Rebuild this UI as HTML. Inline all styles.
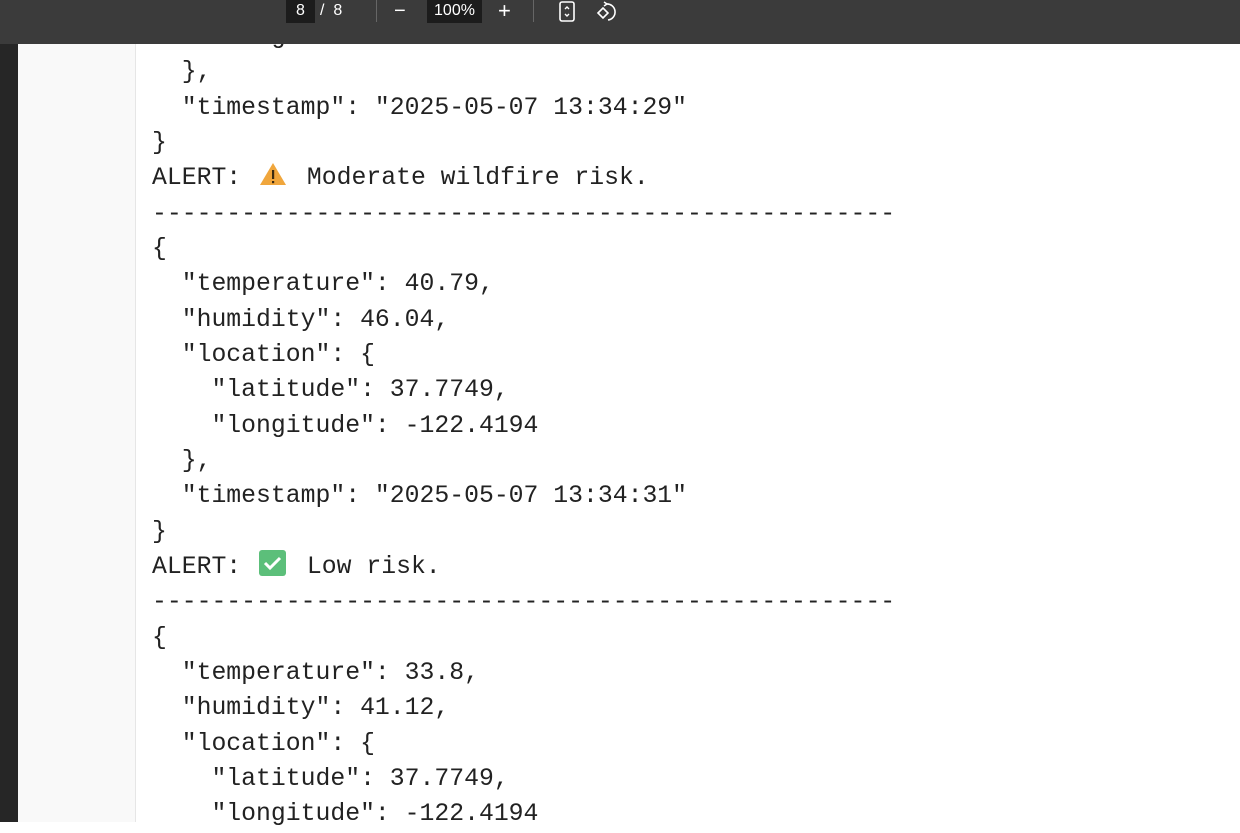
<!DOCTYPE html>
<html><head><meta charset="utf-8"><style>
*{margin:0;padding:0;box-sizing:border-box}
body{width:1240px;height:822px;overflow:hidden;background:#fff;position:relative;font-family:"Liberation Sans",sans-serif}
#bar{position:absolute;left:0;top:0;width:1240px;height:44px;background:#3b3b3b;color:#fff;font-size:16px;z-index:5}
#bar .b{position:absolute;top:0;height:23px;background:#1c1c1c;line-height:22px;text-align:center}
#bar .t{position:absolute;top:0;line-height:22px}
#bar .sep{position:absolute;top:0;width:1px;height:22px;background:#666}
#left{position:absolute;left:0;top:44px;width:18px;height:778px;background:#262626}
#gut{position:absolute;left:18px;top:44px;width:118px;height:778px;background:#f9f9f9;border-right:1px solid #e6e6e6}
pre{position:absolute;left:152px;top:20px;font-family:"Liberation Mono","DejaVu Sans Mono",monospace;font-size:24.77px;line-height:35.33px;color:#222;z-index:1}
.w{display:inline-block;width:36px;height:26px;vertical-align:-3px;position:relative}
</style></head><body>
<div id="bar">
<div class="b" style="left:286px;width:29px">8</div>
<div class="t" style="left:320px">/&nbsp; 8</div>
<div class="sep" style="left:376px"></div>
<div class="t" style="left:394px;font-size:20px">−</div>
<div class="b" style="left:427px;width:55px">100%</div>
<div class="t" style="left:498px;font-size:22px">+</div>
<div class="sep" style="left:533px"></div>
<svg style="position:absolute;left:558px;top:1px" width="18" height="22" viewBox="0 0 18 22"><rect x="2" y="1" width="14" height="19" rx="2" fill="none" stroke="#fff" stroke-width="1.6"/><path d="M7 8l2-2 2 2M7 13l2 2 2-2" fill="none" stroke="#fff" stroke-width="1.4"/></svg>
<svg style="position:absolute;left:595px;top:0" width="24" height="24" viewBox="0 0 24 24"><path d="M3 13l5-5 5 5-5 5z" fill="none" stroke="#fff" stroke-width="1.6"/><path d="M11 4a8 8 0 1 1 2 16" fill="none" stroke="#fff" stroke-width="1.6"/><path d="M9 2l3 2-3 2" fill="none" stroke="#fff" stroke-width="1.5"/></svg>
</div>
<div id="left"></div><div id="gut"></div>
<pre>    "longitude": -122.4194
  },
  "timestamp": "2025-05-07 13:34:29"
}
ALERT: <span class="w"><svg width="36" height="26" viewBox="0 0 36 26"><path d="M17 2L30 24H4z" fill="#f0a63c"/><rect x="16" y="9" width="2.2" height="9" fill="#3a2a10"/><rect x="16" y="20" width="2.2" height="2.2" fill="#3a2a10"/></svg></span> Moderate wildfire risk.
--------------------------------------------------
{
  "temperature": 40.79,
  "humidity": 46.04,
  "location": {
    "latitude": 37.7749,
    "longitude": -122.4194
  },
  "timestamp": "2025-05-07 13:34:31"
}
ALERT: <span class="w"><svg width="36" height="26" viewBox="0 0 36 26"><rect x="3" y="0" width="27" height="26" rx="3" fill="#5cbf7a"/><path d="M9 13l5 5 10-10" fill="none" stroke="#fff" stroke-width="3"/></svg></span> Low risk.
--------------------------------------------------
{
  "temperature": 33.8,
  "humidity": 41.12,
  "location": {
    "latitude": 37.7749,
    "longitude": -122.4194
</pre>
</body></html>
